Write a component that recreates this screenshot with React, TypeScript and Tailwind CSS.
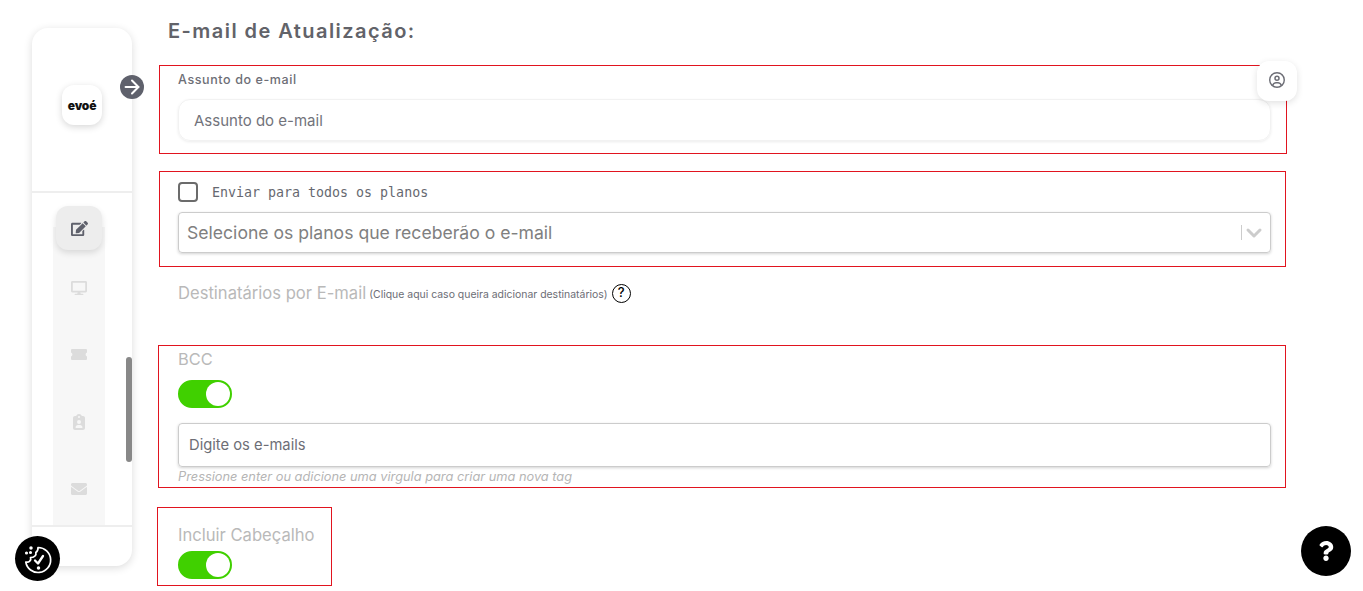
import { FaEdit, FaDesktop, FaEnvelope, FaQuestion } from "react-icons/fa";
import { FaRegCircleUser, FaClipboardUser } from "react-icons/fa6";
import { ChevronDown, ArrowRight } from "lucide-react";

const sans = "font-['Inter','Noto_Sans',sans-serif]";

function Toggle() {
  return (
    <div className="flex h-[28px] w-[54px] items-center justify-end rounded-full border-2 border-[#40d000] bg-[#40d000]">
      <div className="h-[24px] w-[24px] rounded-full bg-white" />
    </div>
  );
}

function NavIcon({ children, active }: { children: React.ReactNode; active?: boolean }) {
  return (
    <div
      className={
        active
          ? "relative flex h-[44px] w-[46px] items-center justify-center rounded-xl bg-[#ededed] text-[#5f616c] shadow-[0_3px_6px_rgba(0,0,0,0.12)]"
          : "flex h-[67px] w-[52px] items-center justify-center text-[#dcdcdc]"
      }
    >
      {children}
    </div>
  );
}

export default function App() {
  return (
    <div className={`relative flex h-[591px] w-[1363px] overflow-hidden bg-white ${sans}`}>
      <aside className="ml-[32px] mt-[28px] flex h-[538px] w-[100px] shrink-0 flex-col rounded-2xl bg-white shadow-[0_2px_8px_rgba(0,0,0,0.14)]">
        <div className="h-[165px] border-b-2 border-[#eeeeee] pl-[30px] pt-[57px]">
          <div className="flex h-[40px] w-[40px] items-center justify-center rounded-xl bg-white shadow-[0_2px_7px_rgba(0,0,0,0.16)]">
            <span className="pt-[2px] text-[12px] font-black leading-none tracking-[-0.2px] text-[#111]">evoé</span>
          </div>
        </div>
        <div className="relative flex flex-1 justify-start overflow-hidden pl-[21px]">
          <div className="mt-[34px] flex w-[52px] flex-col items-center bg-[#f7f7f7]">
            <div className="-mt-[21px]">
              <NavIcon active><FaEdit size={17} /></NavIcon>
            </div>
            <div className="mt-[4px]"><NavIcon><FaDesktop size={16} /></NavIcon></div>
            <NavIcon>
              <svg width="16" height="11" viewBox="0 0 16 11" fill="currentColor">
                <path d="M1 0h14a1 1 0 0 1 1 1v2.6a2 2 0 0 0 0 3.8V10a1 1 0 0 1-1 1H1a1 1 0 0 1-1-1V7.4a2 2 0 0 0 0-3.8V1a1 1 0 0 1 1-1z" />
              </svg>
            </NavIcon>
            <NavIcon><FaClipboardUser size={16} /></NavIcon>
            <NavIcon><FaEnvelope size={16} /></NavIcon>
          </div>
          <div className="absolute right-0 top-[164px] h-[105px] w-[6px] rounded-full bg-[#888888]" />
        </div>
        <div className="h-[41px] border-t-2 border-[#eeeeee]" />
      </aside>

      <main className="ml-[27px] w-[1128px] shrink-0">
        <h1 className="ml-[9px] mt-[19px] h-[24px] whitespace-nowrap text-[20px] font-semibold leading-[24px] tracking-[1.45px] text-[#626369]">
          E-mail de Atualização:
        </h1>

        <section className="mt-[22px] h-[89px] w-[1128px] border border-[#e1141f] pl-[18px] pr-[15px] pt-[6px]">
          <div className="h-[15px] whitespace-nowrap text-[12.5px] font-medium leading-[15px] tracking-[0.6px] text-[#6d6e76]">Assunto do e-mail</div>
          <div className="mt-[12px] flex h-[42px] items-center rounded-xl border border-[#f2f2f2] pl-[15px] pt-[3px] text-[15px] text-[#72737b] shadow-[0_1px_3px_rgba(0,0,0,0.08)]">
            Assunto do e-mail
          </div>
        </section>

        <section className="mt-[17px] h-[96px] w-[1127px] border border-[#e1141f] pl-[18px] pr-[14px] pt-[10px]">
          <div className="flex h-[20px] items-center">
            <div className="h-[20px] w-[20px] rounded-[4px] border-2 border-[#6b6b6b] bg-white" />
            <span className="ml-[14px] pt-[1px] font-['DejaVu_Sans_Mono',monospace] text-[13.3px] leading-[20px] text-[#666870]">
              Enviar para todos os planos
            </span>
          </div>
          <div className="mt-[10px] flex h-[41px] items-center justify-between rounded border border-[#cccccc] pl-[8px] pr-[4px] shadow-[0_1px_3px_rgba(0,0,0,0.18)]">
            <span className="pt-[2px] text-[17.6px] text-[#808080]">Selecione os planos que receberão o e-mail</span>
            <div className="flex items-center">
              <div className="h-[15px] w-px bg-[#cccccc]" />
              <ChevronDown size={24} strokeWidth={3} className="text-[#cccccc]" />
            </div>
          </div>
        </section>

        <div className="ml-[19px] mt-[16px] flex h-[20px] items-center">
          <span className="text-[16.6px] text-[#b9b9b9]">Destinatários por E-mail</span>
          <span className="ml-[3px] mt-[4px] text-[10.45px] text-[#6d6e76]">(Clique aqui caso queira adicionar destinatários)</span>
          <span className="ml-[4px] flex h-[19px] w-[19px] items-center justify-center rounded-full border-[1.5px] border-black text-[13px] font-medium text-black">?</span>
        </div>

        <section className="-ml-px mt-[42px] h-[143px] w-[1128px] border border-[#e1141f] pl-[19px] pr-[14px] pt-[4px]">
          <div className="h-[19px] text-[16.4px] leading-[19px] text-[#b9b9b9]">BCC</div>
          <div className="mt-[11px]"><Toggle /></div>
          <div className="mt-[15px] flex h-[44px] items-center rounded border border-[#cccccc] pl-[10px] text-[14.75px] text-[#6d6e76] shadow-[0_1px_3px_rgba(0,0,0,0.18)]">
            Digite os e-mails
          </div>
          <div className="mt-[1px] text-[12.8px] italic leading-[17px] text-[#b5b5b5]">
            Pressione enter ou adicione uma virgula para criar uma nova tag
          </div>
        </section>

        <section className="-ml-[2px] mt-[19px] h-[79px] w-[175px] border border-[#e1141f] pl-[20px] pt-[17px]">
          <div className="h-[20px] whitespace-nowrap text-[16.6px] leading-[20px] text-[#b9b9b9]">Incluir Cabeçalho</div>
          <div className="mt-[6px]"><Toggle /></div>
        </section>
      </main>

      <div className="absolute left-[120px] top-[75px] flex h-[24px] w-[24px] items-center justify-center rounded-full bg-[#5f616c] text-white">
        <ArrowRight size={22} strokeWidth={2.2} />
      </div>
      <div className="absolute left-[1257px] top-[61px] flex h-[40px] w-[40px] items-center justify-center rounded-xl bg-white pb-[2px] text-[#6d6e76] shadow-[0_2px_7px_rgba(0,0,0,0.12)]">
        <FaRegCircleUser size={16} />
      </div>
      <div className="absolute left-[15px] top-[536px] flex h-[45px] w-[45px] items-center justify-center rounded-full bg-black">
        <svg width="32" height="32" viewBox="0 0 32 32" fill="none" stroke="white" strokeWidth="1.7" strokeLinecap="round" strokeLinejoin="round">
          <path d="M16 4.5A12.5 12.5 0 1 1 3.8 19C7 20 9.5 17 8.5 14.5 12 14.5 14.8 12.5 13.8 9.5 15.2 8.5 16.2 7 16 4.5z" />
          <path d="M13 17.5l3 3 5-7.5" strokeWidth="2.3" />
          <circle cx="16.5" cy="25" r="0.9" fill="white" />
          <circle cx="4.5" cy="10" r="0.7" fill="white" />
          <circle cx="9" cy="5" r="0.9" fill="white" />
          <circle cx="8.5" cy="9.5" r="0.7" fill="white" />
        </svg>
      </div>
      <div className="absolute left-[1301px] top-[526px] flex h-[50px] w-[50px] items-center justify-center rounded-full bg-black text-white">
        <FaQuestion size={20} />
      </div>
    </div>
  );
}
